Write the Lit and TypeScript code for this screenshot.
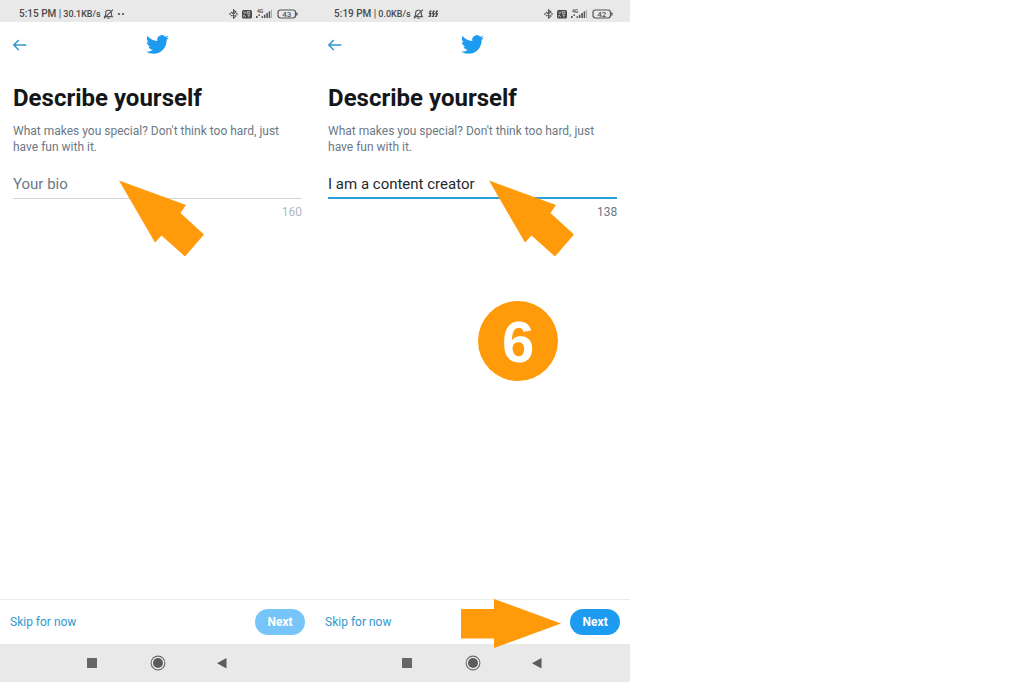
import { LitElement, html, css, svg } from "lit";
import { customElement, property } from "lit/decorators.js";

const bird = svg`<path d="M23.95 4.57a10 10 0 0 1-2.82.77 4.96 4.96 0 0 0 2.16-2.72c-.95.55-2 .95-3.13 1.18a4.92 4.92 0 0 0-8.38 4.48C7.69 8.1 4.07 6.13 1.64 3.16a4.82 4.82 0 0 0-.67 2.48c0 1.71.87 3.21 2.19 4.1a4.9 4.9 0 0 1-2.23-.62v.06a4.92 4.92 0 0 0 3.95 4.83 5 5 0 0 1-2.21.08 4.94 4.94 0 0 0 4.6 3.42A9.87 9.87 0 0 1 0 19.54a13.99 13.99 0 0 0 7.55 2.21c9.05 0 14-7.5 14-13.98 0-.21 0-.42-.02-.63a9.94 9.94 0 0 0 2.46-2.55z"/>`;

@customElement("status-bar")
export class StatusBar extends LitElement {
  @property() time = "";
  @property() speed = "";
  @property() battery = "";
  @property() notice = "dots";

  static styles = css`
    :host {
      display: flex;
      justify-content: space-between;
      align-items: center;
      box-sizing: border-box;
      height: 22px;
      padding: 6px 17px 0 19px;
      background: #e9e9e9;
      color: #4a4a4a;
      font: 500 10px/16px Roboto, sans-serif;
    }
    .group { display: flex; align-items: center; white-space: nowrap; }
    .left { gap: 2px; }
    .right { gap: 4px; }
    .speed { font-size: 9px; }
    svg { display: block; }
    .level { font: 500 8px Roboto, sans-serif; }
    .tiny { font: 700 5px Roboto, sans-serif; }
  `;

  render() {
    return html`
      <div class="group left">
        <span>${this.time} |</span>
        <span class="speed">${this.speed}</span>
        <svg width="11" height="10" viewBox="0 0 11 10" fill="none" stroke="#555" stroke-width="1.1">
          <path d="M1.6 7.6h7.8L8.4 6V4.2C8.400 2.200 7.200 1.300 5.500 1.300S2.600 2.200 2.600 4.200V6zM4.300 9.200h2.400M1 9.400 10 .6" />
        </svg>
        ${this.notice === "dots"
          ? html`<svg width="11" height="10" viewBox="0 0 11 10" fill="#4a4a4a">
              <circle cx="3" cy="5" r="1.100" /><circle cx="7" cy="5" r="1.100" />
            </svg>`
          : html`<svg width="14" height="10" viewBox="0 0 14 10" fill="none" stroke="#4a4a4a" stroke-width="1.4">
              <path d="M5.5 2.2H4.2L3.6 4.6h1.2L4 7.4H2.4M8.7 2.2H7.4L6.8 4.6H8L7.2 7.4H5.6M11.9 2.2h-1.3L10 4.6h1.2l-.8 2.8H8.8" />
            </svg>`}
      </div>
      <div class="group right">
        <svg width="9" height="10" viewBox="0 0 9 10" fill="none" stroke="#555" stroke-width="1.1">
          <path d="m2 3 5 4-2.5 2.2V.8L7 3 2 7" />
          <path d="M.2 5h1.600M7.200 5h1.600" stroke-width="1.400" />
        </svg>
        <svg width="10" height="10" viewBox="0 0 10 10">
          <rect y="1" width="10" height="8.5" rx="1.5" fill="#484848" />
          <path d="m1.5 2.5 1.3 2.2 1.3-2.2M5.3 2.5h2.5v2H5.3zM1.8 6v2M1.8 6l2.2 2M5.3 6h3M6.8 6v2.4" fill="none" stroke="#dcdcdc" stroke-width="0.7" />
        </svg>
        <svg width="17" height="12" viewBox="0 0 17 12" fill="#555">
          <text class="tiny" x="1" y="4.5">4G</text>
          <path d="M0 8h1.600v2H0zM2.400 6.500H4V8H2.400zM5.500 8.200h1.600V10H5.500zM7.900 6.800h1.600V10H7.900zM10.300 5h1.600v5h-1.600zM12.700 3.300h1.500V10h-1.500z" />
          <path d="M15.200 1.800h.8V10h-.8z" fill="#999" />
        </svg>
        <svg width="21" height="10" viewBox="0 0 21 10">
          <rect x="1" y="1" width="17.500" height="8" rx="2.400" fill="none" stroke="#555" stroke-width="1.200" />
          <path d="M19.200 3.500h1.400v3h-1.400z" fill="#555" />
          <text class="level" x="9.800" y="8" text-anchor="middle" fill="#555">${this.battery}</text>
        </svg>
      </div>
    `;
  }
}

@customElement("bio-screen")
export class BioScreen extends LitElement {
  @property() time = "";
  @property() speed = "";
  @property() battery = "";
  @property() notice = "dots";
  @property() bio = "";
  @property({ type: Number }) remaining = 160;

  static styles = css`
    :host {
      display: flex;
      flex-direction: column;
      min-height: 100vh;
      background: #fff;
      font-family: Roboto, sans-serif;
    }
    .top {
      display: grid;
      grid-template-columns: 1fr auto 1fr;
      align-items: center;
      height: 45px;
      padding: 0 12px;
    }
    button {
      font-family: inherit;
      border: 0;
      padding: 0;
      background: none;
      cursor: pointer;
    }
    svg { display: block; }
    .back { justify-self: start; }
    main { flex: 1; padding: 16px 13px 0; }
    h1 { margin: 0; font-size: 24px; line-height: 30px; font-weight: 700; color: #14171a; }
    p { margin: 10px 0 0; font-size: 12px; line-height: 16px; color: #6b7985; }
    .bio {
      display: block;
      box-sizing: border-box;
      width: 100%;
      height: 29px;
      margin-top: 15px;
      padding: 0 0 1px;
      border: 0;
      border-bottom: 1px solid #cfd4d8;
      border-radius: 0;
      outline: 0;
      background: none;
      font: 400 15px/20px Roboto, sans-serif;
      color: #24292d;
    }
    .bio::placeholder { color: #6b7985; opacity: 1; }
    .bio.filled { border-bottom: 2px solid #2d9fd8; padding-bottom: 0; }
    .count { display: block; margin-top: 5px; text-align: right; font-size: 12px; line-height: 16px; color: #b0b8bf; }
    .count.filled { color: #6b7985; }
    .actions {
      display: flex;
      align-items: center;
      justify-content: space-between;
      height: 44px;
      padding: 0 10px;
      border-top: 1px solid #ececec;
    }
    .skip { color: #3298cc; font-size: 12px; line-height: 16px; text-decoration: none; }
    .next {
      width: 50px;
      height: 26px;
      border-radius: 13px;
      background: #1d9bf0;
      color: #fff;
      font-size: 12px;
      font-weight: 700;
    }
    .next:disabled { background: #77c5f8; }
    nav {
      display: flex;
      justify-content: center;
      align-items: center;
      gap: 49px;
      height: 38px;
      background: #e9e9e9;
    }
  `;

  render() {
    const filled = this.bio ? "filled" : "";
    return html`
      <status-bar time=${this.time} speed=${this.speed} battery=${this.battery} notice=${this.notice}></status-bar>
      <header class="top">
        <button class="back" aria-label="Back">
          <svg width="15" height="14" viewBox="0 0 15 14" fill="none" stroke="#3298cc" stroke-width="1.5">
            <path d="M14.300 7H1.800M6.800 2 1.800 7l5 5" />
          </svg>
        </button>
        <svg width="23" height="23" viewBox="0 0 24 24" fill="#1d9bf0" role="img" aria-label="Twitter">${bird}</svg>
      </header>
      <main>
        <h1>Describe yourself</h1>
        <p>What makes you special? Don't think too hard, just have fun with it.</p>
        <input class="bio ${filled}" id="bio" aria-label="Your bio" aria-describedby="count" placeholder="Your bio" maxlength="160" .value=${this.bio} />
        <output class="count ${filled}" id="count" for="bio">${this.remaining}</output>
      </main>
      <footer class="actions">
        <a class="skip" href="#">Skip for now</a>
        <button class="next" ?disabled=${!this.bio}>Next</button>
      </footer>
      <nav aria-label="System">
        <button aria-label="Recent apps">
          <svg width="16" height="16" viewBox="0 0 16 16"><rect x="2" y="3" width="10" height="10" rx="0.6" fill="#666" /></svg>
        </button>
        <button aria-label="Home">
          <svg width="16" height="16" viewBox="0 0 16 16">
            <circle cx="8" cy="8" r="6.9" fill="#f0f0f0" stroke="#6a6a6a" stroke-width="1.100" />
            <circle cx="8" cy="8" r="5" fill="#5c5c5c" />
          </svg>
        </button>
        <button aria-label="Go back">
          <svg width="16" height="16" viewBox="0 0 16 16"><path d="M2 8.200 11.500 2.900v10.600z" fill="#5c5c5c" /></svg>
        </button>
      </nav>
    `;
  }
}

@customElement("app-root")
export class AppRoot extends LitElement {
  static styles = css`
    :host {
      display: grid;
      grid-template-columns: 4fr 4fr 5fr;
      min-height: 100vh;
      background: #fff;
    }
    .step { position: relative; }
    .pointer, .side, .badge { position: absolute; pointer-events: none; fill: #ff9a0a; }
    .pointer { top: 180px; left: 119px; }
    .second .pointer { left: 174px; }
    .side { right: 69px; bottom: 34px; }
    .badge {
      top: 301px;
      left: 163px;
      width: 80px;
      height: 80px;
      border-radius: 50%;
      background: #ff9a0a;
      color: #fff;
      text-align: center;
      font: 700 58px/82px "Liberation Sans", Arial, sans-serif;
    }
  `;

  private pointer() {
    return html`<svg class="pointer" width="86" height="78" viewBox="0 0 86 78" aria-hidden="true">
      <path d="M0 .5 67 25l-5.500 8L85 54.500 66 76.500 42.500 55.500l-6.500 7z" />
    </svg>`;
  }

  render() {
    return html`
      <section class="step">
        <bio-screen time="5:15 PM" speed="30.1KB/s" battery="43" notice="dots" remaining="160"></bio-screen>
        ${this.pointer()}
      </section>
      <section class="step second">
        <bio-screen time="5:19 PM" speed="0.0KB/s" battery="42" notice="waves" bio="I am a content creator" remaining="138"></bio-screen>
        ${this.pointer()}
        <div class="badge">6</div>
        <svg class="side" width="100" height="49" viewBox="0 0 100 49" aria-hidden="true">
          <path d="M0 10h33V0l67 24.500L33 49V39.500H0z" />
        </svg>
      </section>
    `;
  }
}
